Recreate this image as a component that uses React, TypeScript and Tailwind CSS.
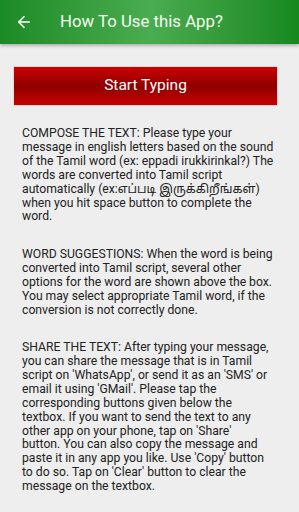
import { ArrowLeft } from "lucide-react";

// line breaks follow the reference wrapping
const paragraphs = [
  [
    "COMPOSE THE TEXT: Please type your",
    "message in english letters based on the sound",
    "of the Tamil word (ex: eppadi irukkirinkal?) The",
    "words are converted into Tamil script",
    "automatically (ex:எப்படி இருக்கிறீங்கள்)",
    "when you hit space button to complete the",
    "word.",
  ],
  [
    "WORD SUGGESTIONS: When the word is being",
    "converted into Tamil script, several other",
    "options for the word are shown above the box.",
    "You may select appropriate Tamil word, if the",
    "conversion is not correctly done.",
  ],
  [
    "SHARE THE TEXT: After typing your message,",
    "you can share the message that is in Tamil",
    "script on 'WhatsApp', or send it as an 'SMS' or",
    "email it using 'GMail'. Please tap the",
    "corresponding buttons given below the",
    "textbox. If you want to send the text to any",
    "other app on your phone, tap on 'Share'",
    "button. You can also copy the message and",
    "paste it in any app you like. Use 'Copy' button",
    "to do so. Tap on 'Clear' button to clear the",
    "message on the textbox.",
  ],
];

export default function App() {
  return (
    <div
      className="w-[299px] h-[512px] overflow-hidden bg-[#eeeeee] flex flex-col"
      style={{ fontFamily: "Roboto, 'Noto Sans Tamil', 'Noto Sans', sans-serif" }}
    >
      <header className="h-[44px] shrink-0 flex items-center bg-gradient-to-r from-[#1a8a24] via-[#4aac50] to-[#15881e] shadow-[0_2px_3px_rgba(0,0,0,0.25)] z-10">
        <ArrowLeft className="w-[18px] h-[18px] ml-[15px] text-white" strokeWidth={2.2} />
        <h1 className="ml-[27px] text-[16.8px] text-[#f3fff0]">
          How To Use this App?
        </h1>
      </header>

      <main className="px-[13px] pt-[22px]">
        <button className="w-[265px] h-[40px] flex items-center justify-center border border-[#f3d6d6] bg-gradient-to-b from-[#cc0000] via-[#8e0000] to-[#c80000] text-white text-[15.5px]">
          Start Typing
        </button>

        <div className="pl-[9px] pt-[21px] text-[12.2px] leading-[13.9px] text-[#222222] whitespace-nowrap">
          {paragraphs.map((lines, i) => (
            <p key={i} className={i > 0 ? "mt-[23.6px]" : ""}>
              {lines.map((l, j) => (
                <span key={j} className="block">
                  {l}
                </span>
              ))}
            </p>
          ))}
        </div>
      </main>
    </div>
  );
}
